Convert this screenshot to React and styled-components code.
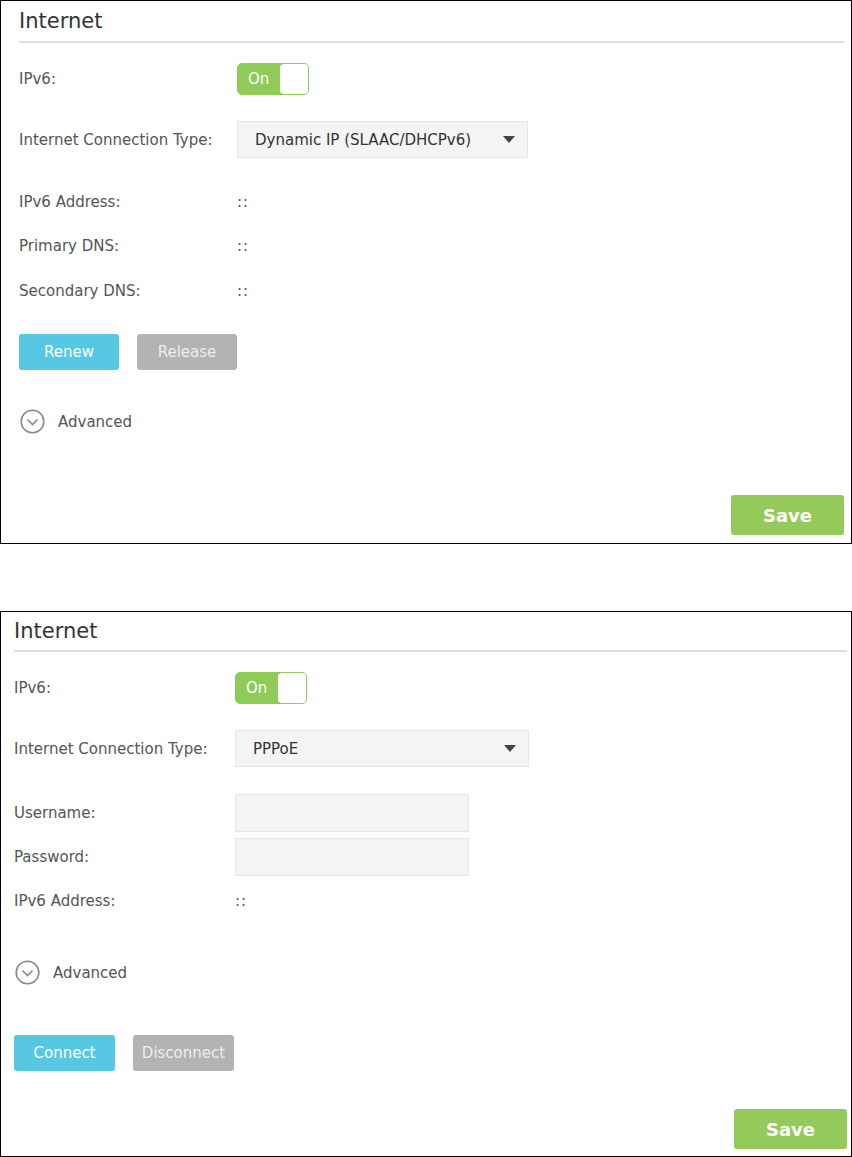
import React from "react";
import styled, { createGlobalStyle } from "styled-components";

const GlobalStyle = createGlobalStyle`
  html, body {
    margin: 0;
    padding: 0;
    background: #fff;
  }
  body {
    font-family: "DejaVu Sans", Verdana, sans-serif;
    font-size: 15px;
    color: #555;
  }
`;

const Page = styled.div`
  width: 852px;
  display: flex;
  flex-direction: column;
  gap: 67px;
`;

const Panel = styled.div`
  box-sizing: border-box;
  width: 852px;
  height: ${(p) => p.$height}px;
  border: 1px solid #000;
  padding: 0 ${(p) => p.$padRight}px 0 ${(p) => p.$padLeft}px;
  display: flex;
  flex-direction: column;
`;

const Header = styled.div`
  height: ${(p) => p.$height}px;
  display: flex;
  align-items: center;
  font-size: 21px;
  color: #333;
  border-bottom: 2px solid #dedede;
`;

const Row = styled.div`
  display: flex;
  align-items: center;
  height: ${(p) => p.$height || 24}px;
  margin-top: ${(p) => p.$top || 0}px;
`;

const Label = styled.div`
  width: ${(p) => p.$width}px;
  flex: none;
  color: #555;
  white-space: nowrap;
`;

const Value = styled.div`
  color: #555;
  letter-spacing: 1px;
`;

const Toggle = styled.div`
  box-sizing: border-box;
  width: 72px;
  height: 32px;
  border: 1px solid #8fcb58;
  border-radius: 5px;
  background: #8fcb58;
  display: flex;
  align-items: center;
  padding-left: 10px;
  color: #fff;
  font-size: 15px;
  position: relative;
`;

const Knob = styled.span`
  position: absolute;
  right: 0;
  top: 0;
  bottom: 0;
  width: 28px;
  background: #fff;
  border-radius: 4px;
`;

const Select = styled.div`
  box-sizing: border-box;
  width: ${(p) => p.$width}px;
  height: 37px;
  background: #f4f4f4;
  border: 1px solid #e6e6e6;
  display: flex;
  align-items: center;
  justify-content: space-between;
  padding: 0 12px 0 17px;
  color: #333;
`;

const Caret = styled.span`
  width: 0;
  height: 0;
  border-left: 6px solid transparent;
  border-right: 6px solid transparent;
  border-top: 7px solid #444;
`;

const TextInput = styled.input`
  box-sizing: border-box;
  width: 234px;
  height: 38px;
  background: #f4f4f4;
  border: 1px solid #e6e6e6;
  outline: none;
  margin: 0;
`;

const Buttons = styled.div`
  display: flex;
  gap: 18px;
  margin-top: ${(p) => p.$top}px;
`;

const Button = styled.button`
  box-sizing: border-box;
  width: ${(p) => p.$width || 100}px;
  height: 36px;
  border: none;
  border-radius: 3px;
  background: ${(p) => (p.$grey ? "#b3b3b3" : "#56c8e3")};
  color: ${(p) => (p.$grey ? "#eeeeee" : "#fff")};
  font-family: inherit;
  font-size: 15px;
  padding: 0;
`;

const Advanced = styled.div`
  display: flex;
  align-items: center;
  gap: 13px;
  margin-top: ${(p) => p.$top}px;
  margin-left: 1px;
  color: #555;
  font-size: 15px;
  height: 25px;
`;

const Footer = styled.div`
  display: flex;
  justify-content: flex-end;
  margin-top: auto;
  margin-bottom: ${(p) => p.$bottom}px;
`;

const SaveButton = styled.button`
  width: 113px;
  height: 40px;
  border: none;
  border-radius: 3px;
  background: #94ca5a;
  color: #fff;
  font-family: inherit;
  font-size: 18px;
  font-weight: 600;
  padding: 0;
`;

const ChevronCircle = () => (
  <svg width="25" height="25" viewBox="0 0 25 25">
    <circle cx="12.5" cy="12.5" r="11.3" fill="none" stroke="#8a8a8a" strokeWidth="1.6" />
    <path d="M7.5 10.5 L12.5 15.5 L17.5 10.5" fill="none" stroke="#8a8a8a" strokeWidth="1.6" />
  </svg>
);

const OnToggle = () => (
  <Toggle>
    On
    <Knob />
  </Toggle>
);

export default function App() {
  return (
    <>
      <GlobalStyle />
      <Page>
        <Panel $height={544} $padLeft={18} $padRight={7}>
          <Header $height={40}>Internet</Header>
          <Row $top={20} $height={32}>
            <Label $width={218}>IPv6:</Label>
            <OnToggle />
          </Row>
          <Row $top={26} $height={37}>
            <Label $width={218}>Internet Connection Type:</Label>
            <Select $width={291}>
              Dynamic IP (SLAAC/DHCPv6)
              <Caret />
            </Select>
          </Row>
          <Row $top={32}>
            <Label $width={218}>IPv6 Address:</Label>
            <Value>::</Value>
          </Row>
          <Row $top={20}>
            <Label $width={218}>Primary DNS:</Label>
            <Value>::</Value>
          </Row>
          <Row $top={21}>
            <Label $width={218}>Secondary DNS:</Label>
            <Value>::</Value>
          </Row>
          <Buttons $top={31}>
            <Button>Renew</Button>
            <Button $grey>Release</Button>
          </Buttons>
          <Advanced $top={39}>
            <ChevronCircle />
            Advanced
          </Advanced>
          <Footer $bottom={8}>
            <SaveButton>Save</SaveButton>
          </Footer>
        </Panel>

        <Panel $height={546} $padLeft={13} $padRight={4}>
          <Header $height={38}>Internet</Header>
          <Row $top={20} $height={32}>
            <Label $width={221}>IPv6:</Label>
            <OnToggle />
          </Row>
          <Row $top={26} $height={37}>
            <Label $width={221}>Internet Connection Type:</Label>
            <Select $width={294}>
              PPPoE
              <Caret />
            </Select>
          </Row>
          <Row $top={27} $height={37}>
            <Label $width={221}>Username:</Label>
            <TextInput type="text" />
          </Row>
          <Row $top={7} $height={37}>
            <Label $width={221}>Password:</Label>
            <TextInput type="password" />
          </Row>
          <Row $top={14}>
            <Label $width={221}>IPv6 Address:</Label>
            <Value>::</Value>
          </Row>
          <Advanced $top={47}>
            <ChevronCircle />
            Advanced
          </Advanced>
          <Buttons $top={50}>
            <Button $width={101}>Connect</Button>
            <Button $grey $width={101}>Disconnect</Button>
          </Buttons>
          <Footer $bottom={7}>
            <SaveButton>Save</SaveButton>
          </Footer>
        </Panel>
      </Page>
    </>
  );
}
